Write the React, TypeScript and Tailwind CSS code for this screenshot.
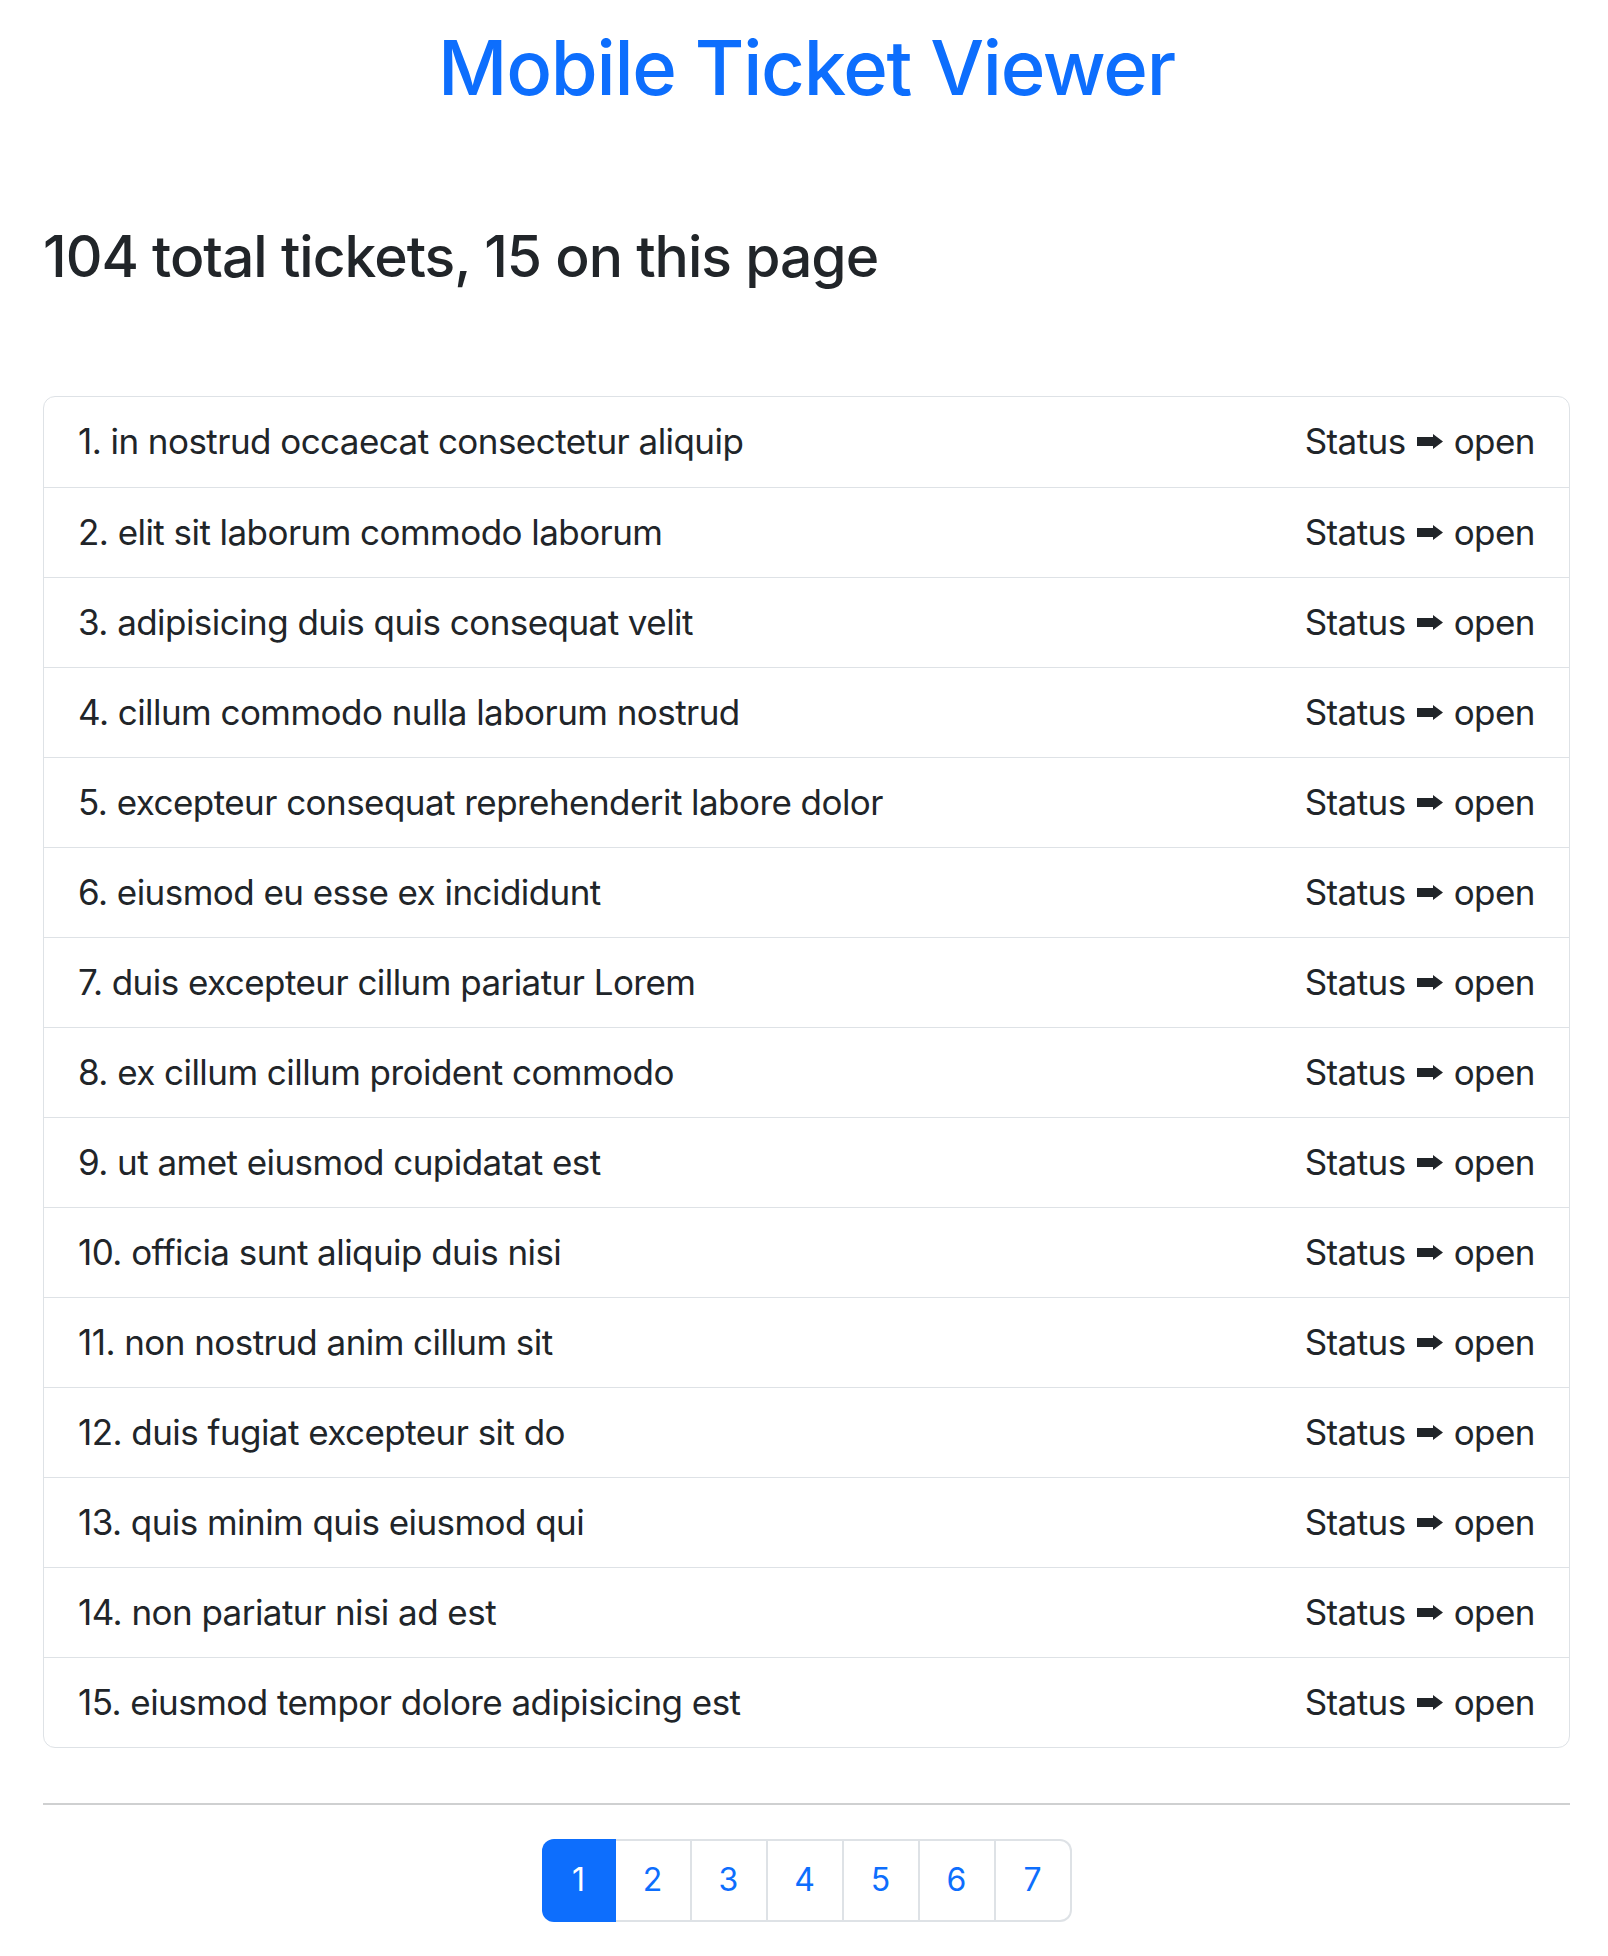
import React from "react";

const tickets = [
  "in nostrud occaecat consectetur aliquip",
  "elit sit laborum commodo laborum",
  "adipisicing duis quis consequat velit",
  "cillum commodo nulla laborum nostrud",
  "excepteur consequat reprehenderit labore dolor",
  "eiusmod eu esse ex incididunt",
  "duis excepteur cillum pariatur Lorem",
  "ex cillum cillum proident commodo",
  "ut amet eiusmod cupidatat est",
  "officia sunt aliquip duis nisi",
  "non nostrud anim cillum sit",
  "duis fugiat excepteur sit do",
  "quis minim quis eiusmod qui",
  "non pariatur nisi ad est",
  "eiusmod tempor dolore adipisicing est",
];

function Arrow() {
  return (
    <svg width="26" height="15" viewBox="0 0 26 15" className="mx-[11px] shrink-0" aria-hidden="true">
      <path d="M0 3 H16 V0 L26 7.5 L16 15 V12 H0 Z" fill="#212529" />
    </svg>
  );
}

export default function App() {
  return (
    <div
      className="min-h-[1956px] w-[1608px] bg-white pl-[43px] pr-[38px] text-[#212529]"
      style={{ fontFamily: "Inter, 'Noto Sans', sans-serif" }}
    >
      <h1 className="pt-[22px] text-center text-[76px] font-medium leading-[1.2] tracking-[-1.25px] text-[#0d6efd]">
        Mobile Ticket Viewer
      </h1>
      <h2 className="mt-[110px] text-[57px] font-medium leading-[1.2] tracking-[-1px]">
        104 total tickets, 15 on this page
      </h2>
      <div className="mt-[104px] overflow-hidden rounded-[12px] border border-[#dee2e6]">
        {tickets.map((t, i) => (
          <div
            key={i}
            className={
              "flex h-[90px] items-center justify-between px-[34px] text-[35px] leading-none tracking-[-0.55px]" +
              (i > 0 ? " border-t border-[#dee2e6]" : "")
            }
          >
            <span>
              {i + 1}. {t}
            </span>
            <span className="flex items-center">
              Status
              <Arrow />
              open
            </span>
          </div>
        ))}
      </div>
      <hr className="mt-[55px] border-t-2 border-[#cfd0d1]" />
      <div className="mt-[34px] flex justify-center">
        <div className="flex h-[83px] text-[32px]">
          {[1, 2, 3, 4, 5, 6, 7].map((n) => (
            <div
              key={n}
              className={
                n === 1
                  ? "flex w-[74px] items-center justify-center rounded-l-[12px] bg-[#0d6efd] text-white"
                  : n === 7
                  ? "flex w-[76px] items-center justify-center rounded-r-[12px] border-y-2 border-r-2 border-[#dee2e6] text-[#0d6efd]"
                  : "flex w-[76px] items-center justify-center border-y-2 border-r-2 border-[#dee2e6] text-[#0d6efd]"
              }
            >
              {n}
            </div>
          ))}
        </div>
      </div>
    </div>
  );
}
